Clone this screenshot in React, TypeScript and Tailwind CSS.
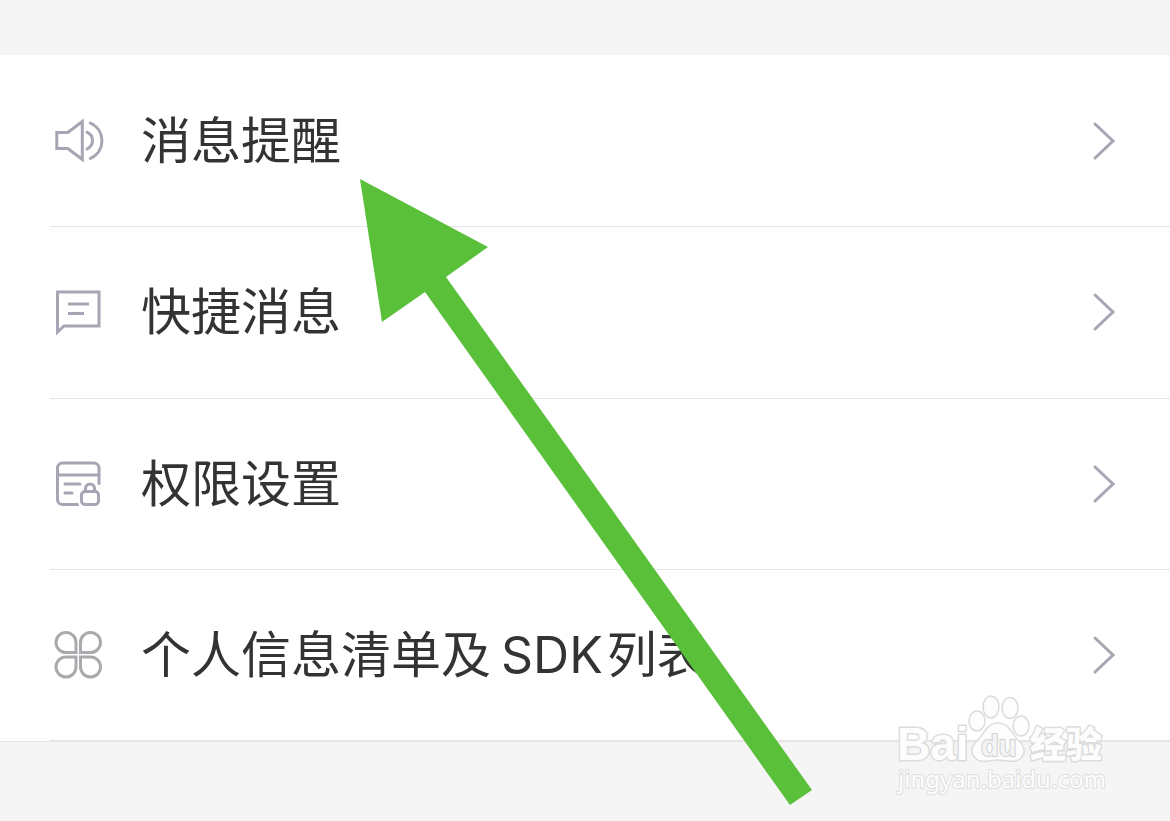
import type { ReactNode } from 'react';

function SoundIcon() {
  return (
    <svg viewBox="0 0 56 56" className="h-14 w-14" fill="none" stroke="#a5a5b3" strokeWidth="3">
      <path d="M6.800 19.500h11l14.500-11v38l-14.500-11h-11z" />
      <path d="M37 19.200c7.300 3.300 7.300 13.500 0 16.800" strokeLinecap="round" />
      <path d="M40.300 10c15.500 7 15.500 28.500 0 35.500" strokeLinecap="round" />
    </svg>
  );
}

function MessageIcon() {
  return (
    <svg viewBox="0 0 56 56" className="h-14 w-14" fill="none" stroke="#a5a5b3" strokeWidth="3">
      <path d="M7.500 8h41.500v34h-35l-6.500 6z" />
      <path d="M18 20h21M18 29.500h16" />
    </svg>
  );
}

function PermissionIcon() {
  return (
    <svg viewBox="0 0 56 56" className="h-14 w-14" fill="none" stroke="#a5a5b3" strokeWidth="3" strokeLinecap="round">
      <path d="M27.500 48.500h-15a5 5 0 0 1-5-5v-31.500a5 5 0 0 1 5-5h31.500a5 5 0 0 1 5 5v15.500" />
      <path d="M8 19h41M15 28h15M15 37h7" />
      <rect x="31.500" y="35.500" width="17" height="13" rx="3.500" />
      <path d="M35.500 35v-2.500c0-6 9-6 9 0v2.500" />
    </svg>
  );
}

function CloverIcon() {
  return (
    <svg viewBox="0 0 56 56" className="h-14 w-14" fill="none" stroke="#aaaaae" strokeWidth="3">
      <path d="M26 25.500h-10a10 10 0 1 1 10-10z" />
      <path d="M30.500 25.500h10a10 10 0 1 0-10-10z" />
      <path d="M26 30h-10a10 10 0 1 0 10 10z" />
      <path d="M30.500 30h10a10 10 0 1 1-10 10z" />
    </svg>
  );
}

function Chevron() {
  return (
    <svg viewBox="0 0 24 40" className="h-10 w-6 shrink-0" fill="none" stroke="#a5a5b3" strokeWidth="3" strokeLinecap="round">
      <path d="M3 3l18 17L3 37" />
    </svg>
  );
}

interface Item {
  label: ReactNode;
  icon: ReactNode;
}

const items: Item[] = [
  { label: '消息提醒', icon: <SoundIcon /> },
  { label: '快捷消息', icon: <MessageIcon /> },
  { label: '权限设置', icon: <PermissionIcon /> },
  {
    label: (
      <>
        个人信息清单及<span className="ml-2.5 mr-1">SDK</span>列表
      </>
    ),
    icon: <CloverIcon />,
  },
];

function Arrow() {
  return (
    <svg
      viewBox="0 0 452 626"
      className="pointer-events-none absolute left-[360px] top-[179px] h-[626px] w-[452px]"
      fill="#5ac03a"
    >
      <polygon points="0,0 128,68 86,98 452,611 430,626 65,113 22,143" />
    </svg>
  );
}

function Watermark() {
  return (
    <svg
      viewBox="0 0 240 120"
      className="pointer-events-none absolute right-[50px] top-[685px] h-[120px] w-[240px]"
      fill="#fdfdfd"
      stroke="#dcdcdc"
      strokeWidth="2"
      strokeLinejoin="round"
    >
      <text
        x="17"
        y="75"
        fontSize="46"
        fontFamily="'Liberation Sans', sans-serif"
        fontWeight="700"
        strokeWidth="3"
        paintOrder="stroke"
      >
        Bai
      </text>
      <ellipse cx="97" cy="36" rx="8" ry="10" strokeWidth="1.500" />
      <ellipse cx="111" cy="22" rx="8" ry="11" strokeWidth="1.500" />
      <ellipse cx="130" cy="23" rx="8" ry="10.500" strokeWidth="1.500" />
      <ellipse cx="141" cy="41" rx="8" ry="10" strokeWidth="1.500" />
      <path
        d="M118 38c11 0 14 11 20 17 7 6 8 13 3 18-6 6-15 2-23 2s-17 4-23-2c-5-5-4-12 3-18 6-6 9-17 20-17z"
        strokeWidth="1.500"
      />
      <text
        x="101"
        y="71"
        fontSize="29"
        fontFamily="'Liberation Sans', sans-serif"
        fontWeight="700"
        fill="#f4f4f4"
        stroke="#cfcfcf"
        paintOrder="stroke"
      >
        du
      </text>
      <text
        x="150"
        y="73"
        fontSize="36"
        fontFamily="'Noto Sans CJK SC', sans-serif"
        fontWeight="900"
        strokeWidth="3"
        paintOrder="stroke"
      >
        经验
      </text>
      <text x="18" y="103" fontSize="24" fontFamily="'Noto Sans', sans-serif" stroke="#dedede" paintOrder="stroke">
        jingyan.baidu.com
      </text>
    </svg>
  );
}

export default function App() {
  return (
    <div className="relative min-h-screen overflow-hidden bg-[#f5f5f5] pt-[55px] font-['Inter','Noto_Sans_CJK_SC',sans-serif] text-[#333333]">
      <ul className="grid min-h-[687px] auto-rows-fr border-b border-[#e4e4e4] bg-white pt-px">
        {items.map((item, index) => (
          <li key={index} className="flex pl-[50px]">
            <a href="#" className="flex flex-1 items-center border-b border-[#e6e6e6] pr-[54px]">
              {item.icon}
              <span className="ml-[35px] flex-1 whitespace-nowrap text-[50px] leading-[60px]">{item.label}</span>
              <Chevron />
            </a>
          </li>
        ))}
      </ul>

      <Watermark />
      <Arrow />
    </div>
  );
}
